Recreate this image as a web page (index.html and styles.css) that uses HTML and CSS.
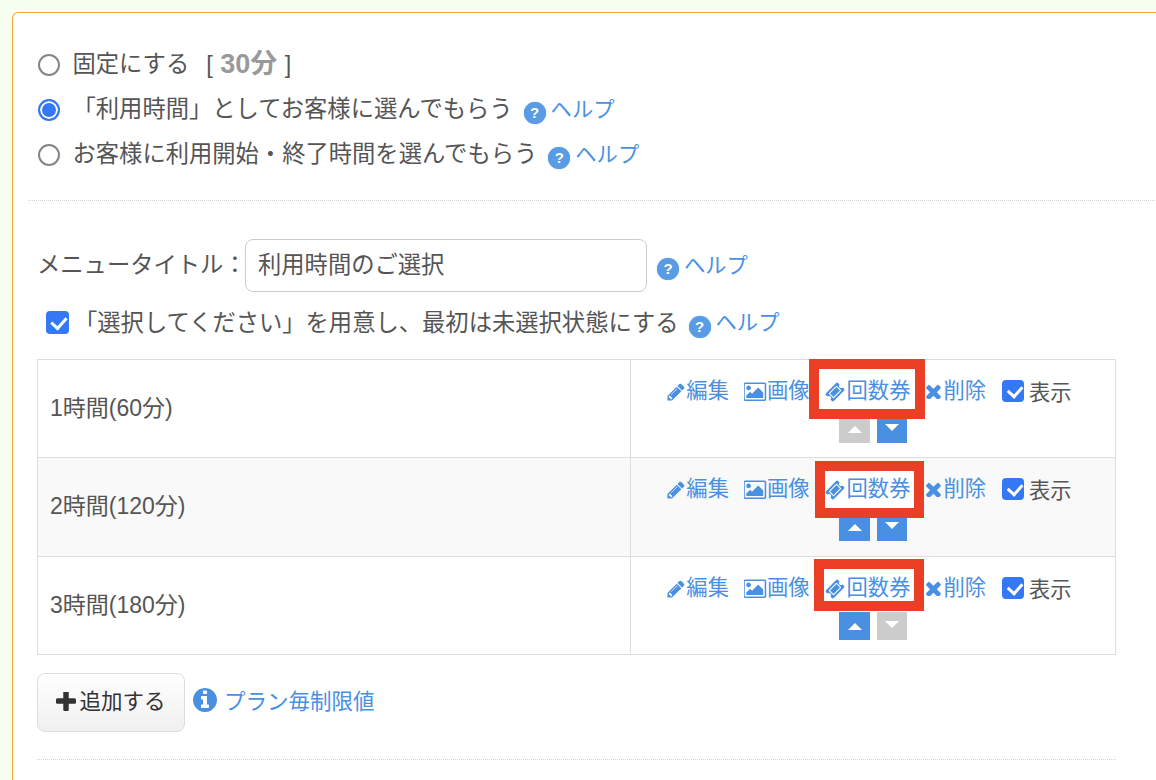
FILE: index.html
```html
<!DOCTYPE html>
<html lang="ja">
<head>
<meta charset="utf-8">
<title>メニュー設定</title>
<link rel="stylesheet" href="styles.css">
</head>
<body>
<main class="card">
  <label class="choice"><input class="radio" type="radio" name="mode"><span>固定にする</span><span class="fixed">[ <b>30分</b> ]</span></label>
  <label class="choice"><input class="radio" type="radio" name="mode" checked><span>「利用時間」としてお客様に選んでもらう</span><a class="help" href="#"><span class="q">?</span>ヘルプ</a></label>
  <label class="choice"><input class="radio" type="radio" name="mode"><span>お客様に利用開始・終了時間を選んでもらう</span><a class="help" href="#"><span class="q">?</span>ヘルプ</a></label>
  <hr class="rule rule-wide">
  <div class="title-row">
    <label class="title-label" for="menu-title">メニュータイトル：</label>
    <input class="title-input" id="menu-title" type="text" value="利用時間のご選択">
    <a class="help" href="#"><span class="q">?</span>ヘルプ</a>
  </div>
  <label class="unselected"><input class="check check-lg" type="checkbox" checked><span>「選択してください」を用意し、最初は未選択状態にする</span><a class="help" href="#"><span class="q">?</span>ヘルプ</a></label>
  <table class="plans">
    <tr>
      <td class="plan-name">1時間(60分)</td>
      <td class="plan-actions">
        <div class="actions">
          <a class="act" href="#"><svg class="ic" viewBox="0 0 1792 1792"><path d="M491 1536l91-91-235-235-91 91v107h128v128h107zm523-928q0-22-22-22-10 0-17 7l-542 542q-7 7-7 17 0 22 22 22 10 0 17-7l542-542q7-7 7-17zm-54-192l416 416-832 832h-416v-416zm683 96q0 53-37 90l-166 166-416-416 166-165q36-38 90-38 53 0 91 38l235 234q37 39 37 91z"/></svg>編集</a>
          <a class="act" href="#"><svg class="ic-pic" viewBox="0 0 1920 1792"><path d="M576 576q0 80-56 136t-136 56-136-56-56-136 56-136 136-56 136 56 56 136zm1024 384v448h-1408v-192l320-320 160 160 512-512zm96-704h-1600q-13 0-22.5 9.5t-9.5 22.5v1216q0 13 9.5 22.5t22.5 9.5h1600q13 0 22.5-9.5t9.5-22.5v-1216q0-13-9.5-22.5t-22.5-9.5zm160 32v1216q0 66-47 113t-113 47h-1600q-66 0-113-47t-47-113v-1216q0-66 47-113t113-47h1600q66 0 113 47t47 113z"/></svg>画像</a>
          <a class="act ticket ticket-1" href="#"><svg class="ic ic-ticket" viewBox="0 0 1792 1792"><path d="M1024 452l316 316-572 572-316-316zm-211 979l618-618q19-19 19-45t-19-45l-362-362q-18-18-45-18t-45 18l-618 618q-19 19-19 45t19 45l362 362q18 18 45 18t45-18zm889-637l-907 908q-37 37-90.5 37t-90.5-37l-126-126q56-56 56-136t-56-136-136-56-136 56l-125-126q-37-37-37-90.5t37-90.5l907-906q37-37 90.5-37t90.5 37l125 125q-56 56-56 136t56 136 136 56 136-56l126 125q37 37 37 90.5t-37 90.5z"/></svg>回数券</a>
          <a class="act" href="#"><svg class="ic-x" viewBox="300 300 1200 1200"><path d="M1490 1322q0 40-28 68l-136 136q-28 28-68 28t-68-28l-294-294-294 294q-28 28-68 28t-68-28l-136-136q-28-28-28-68t28-68l294-294-294-294q-28-28-28-68t28-68l136-136q28-28 68-28t68 28l294 294 294-294q28-28 68-28t68 28l136 136q28 28 28 68t-28 68l-294 294 294 294q28 28 28 68z"/></svg>削除</a>
          <label class="show"><input class="check check-sm" type="checkbox" checked>表示</label>
        </div>
        <div class="moves"><span class="move off"><i class="caret-up"></i></span><span class="move"><i class="caret-down"></i></span></div>
      </td>
    </tr>
    <tr class="even">
      <td class="plan-name">2時間(120分)</td>
      <td class="plan-actions">
        <div class="actions">
          <a class="act" href="#"><svg class="ic" viewBox="0 0 1792 1792"><path d="M491 1536l91-91-235-235-91 91v107h128v128h107zm523-928q0-22-22-22-10 0-17 7l-542 542q-7 7-7 17 0 22 22 22 10 0 17-7l542-542q7-7 7-17zm-54-192l416 416-832 832h-416v-416zm683 96q0 53-37 90l-166 166-416-416 166-165q36-38 90-38 53 0 91 38l235 234q37 39 37 91z"/></svg>編集</a>
          <a class="act" href="#"><svg class="ic-pic" viewBox="0 0 1920 1792"><path d="M576 576q0 80-56 136t-136 56-136-56-56-136 56-136 136-56 136 56 56 136zm1024 384v448h-1408v-192l320-320 160 160 512-512zm96-704h-1600q-13 0-22.5 9.5t-9.5 22.5v1216q0 13 9.5 22.5t22.5 9.5h1600q13 0 22.5-9.5t9.5-22.5v-1216q0-13-9.5-22.5t-22.5-9.5zm160 32v1216q0 66-47 113t-113 47h-1600q-66 0-113-47t-47-113v-1216q0-66 47-113t113-47h1600q66 0 113 47t47 113z"/></svg>画像</a>
          <a class="act ticket ticket-2" href="#"><svg class="ic ic-ticket" viewBox="0 0 1792 1792"><path d="M1024 452l316 316-572 572-316-316zm-211 979l618-618q19-19 19-45t-19-45l-362-362q-18-18-45-18t-45 18l-618 618q-19 19-19 45t19 45l362 362q18 18 45 18t45-18zm889-637l-907 908q-37 37-90.5 37t-90.5-37l-126-126q56-56 56-136t-56-136-136-56-136 56l-125-126q-37-37-37-90.5t37-90.5l907-906q37-37 90.5-37t90.5 37l125 125q-56 56-56 136t56 136 136 56 136-56l126 125q37 37 37 90.5t-37 90.5z"/></svg>回数券</a>
          <a class="act" href="#"><svg class="ic-x" viewBox="300 300 1200 1200"><path d="M1490 1322q0 40-28 68l-136 136q-28 28-68 28t-68-28l-294-294-294 294q-28 28-68 28t-68-28l-136-136q-28-28-28-68t28-68l294-294-294-294q-28-28-28-68t28-68l136-136q28-28 68-28t68 28l294 294 294-294q28-28 68-28t68 28l136 136q28 28 28 68t-28 68l-294 294 294 294q28 28 28 68z"/></svg>削除</a>
          <label class="show"><input class="check check-sm" type="checkbox" checked>表示</label>
        </div>
        <div class="moves"><span class="move"><i class="caret-up"></i></span><span class="move"><i class="caret-down"></i></span></div>
      </td>
    </tr>
    <tr class="odd">
      <td class="plan-name">3時間(180分)</td>
      <td class="plan-actions">
        <div class="actions">
          <a class="act" href="#"><svg class="ic" viewBox="0 0 1792 1792"><path d="M491 1536l91-91-235-235-91 91v107h128v128h107zm523-928q0-22-22-22-10 0-17 7l-542 542q-7 7-7 17 0 22 22 22 10 0 17-7l542-542q7-7 7-17zm-54-192l416 416-832 832h-416v-416zm683 96q0 53-37 90l-166 166-416-416 166-165q36-38 90-38 53 0 91 38l235 234q37 39 37 91z"/></svg>編集</a>
          <a class="act" href="#"><svg class="ic-pic" viewBox="0 0 1920 1792"><path d="M576 576q0 80-56 136t-136 56-136-56-56-136 56-136 136-56 136 56 56 136zm1024 384v448h-1408v-192l320-320 160 160 512-512zm96-704h-1600q-13 0-22.5 9.5t-9.5 22.5v1216q0 13 9.5 22.5t22.5 9.5h1600q13 0 22.5-9.5t9.5-22.5v-1216q0-13-9.5-22.5t-22.5-9.5zm160 32v1216q0 66-47 113t-113 47h-1600q-66 0-113-47t-47-113v-1216q0-66 47-113t113-47h1600q66 0 113 47t47 113z"/></svg>画像</a>
          <a class="act ticket ticket-3" href="#"><svg class="ic ic-ticket" viewBox="0 0 1792 1792"><path d="M1024 452l316 316-572 572-316-316zm-211 979l618-618q19-19 19-45t-19-45l-362-362q-18-18-45-18t-45 18l-618 618q-19 19-19 45t19 45l362 362q18 18 45 18t45-18zm889-637l-907 908q-37 37-90.5 37t-90.5-37l-126-126q56-56 56-136t-56-136-136-56-136 56l-125-126q-37-37-37-90.5t37-90.5l907-906q37-37 90.5-37t90.5 37l125 125q-56 56-56 136t56 136 136 56 136-56l126 125q37 37 37 90.5t-37 90.5z"/></svg>回数券</a>
          <a class="act" href="#"><svg class="ic-x" viewBox="300 300 1200 1200"><path d="M1490 1322q0 40-28 68l-136 136q-28 28-68 28t-68-28l-294-294-294 294q-28 28-68 28t-68-28l-136-136q-28-28-28-68t28-68l294-294-294-294q-28-28-28-68t28-68l136-136q28-28 68-28t68 28l294 294 294-294q28-28 68-28t68 28l136 136q28 28 28 68t-28 68l-294 294 294 294q28 28 28 68z"/></svg>削除</a>
          <label class="show"><input class="check check-sm" type="checkbox" checked>表示</label>
        </div>
        <div class="moves"><span class="move"><i class="caret-up"></i></span><span class="move off"><i class="caret-down"></i></span></div>
      </td>
    </tr>
  </table>
  <div class="add-row">
    <button class="add-btn" type="button"><svg class="ic-plus" viewBox="192 192 1408 1408"><path d="M1600 736v192q0 40-28 68t-68 28h-416v416q0 40-28 68t-68 28h-192q-40 0-68-28t-28-68v-416h-416q-40 0-68-28t-28-68v-192q0-40 28-68t68-28h416v-416q0-40 28-68t68-28h192q40 0 68 28t28 68v416h416q40 0 68 28t28 68z"/></svg><span class="add-text">追加する</span></button>
    <a class="limit" href="#"><svg class="ic-info" viewBox="128 128 1536 1536"><path d="M1152 1376v-160q0-14-9-23t-23-9h-96v-512q0-14-9-23t-23-9h-320q-14 0-23 9t-9 23v160q0 14 9 23t23 9h96v320h-96q-14 0-23 9t-9 23v160q0 14 9 23t23 9h448q14 0 23-9t9-23zm-128-896v-160q0-14-9-23t-23-9h-192q-14 0-23 9t-9 23v160q0 14 9 23t23 9h192q14 0 23-9t9-23zm640 416q0 209-103 385.5t-279.5 279.5-385.5 103-385.5-103-279.5-279.5-103-385.5 103-385.5 279.5-279.5 385.5-103 385.5 103 279.5 279.5 103 385.5z"/></svg><span class="limit-text">プラン毎制限値</span></a>
  </div>
  <hr class="rule rule-table">
</main>
</body>
</html>
```
FILE: styles.css
```css
html, body {
  margin: 0;
  height: 780px;
  overflow: hidden;
  background: #f6fff0;
}
body {
  padding: 12px 0 0 12px;
  box-sizing: border-box;
  color: #555;
  font-family: "Liberation Sans", "Noto Sans CJK JP", sans-serif;
  font-size: 23.3px;
}
a { color: #4a90e2; text-decoration: none; }
.card {
  width: 1200px;
  height: 768px;
  box-sizing: border-box;
  padding: 29px 0 0 24px;
  background: #fff;
  border: 1px solid #f2a530;
  border-bottom: 0;
  border-radius: 6px 6px 0 0;
}
.choice {
  display: flex;
  align-items: center;
  height: 45px;
  line-height: 43px;
}
.radio {
  appearance: none;
  box-sizing: border-box;
  width: 22px;
  height: 22px;
  margin: 0 12.5px 0 1px;
  flex: none;
  border: 2px solid #858585;
  border-radius: 50%;
  background: #fff;
}
.radio:checked {
  border-color: #3478f6;
  background: #3478f6;
  box-shadow: inset 0 0 0 2px #fff;
}
.fixed { margin-left: 17px; }
.fixed b { color: #999; margin: 0 1px; font-size: 27px; }
.help {
  display: inline-flex;
  align-items: center;
  height: 40px;
  line-height: 38px;
  margin-left: 11px;
  font-size: 21.3px;
}
.q {
  display: inline-block;
  width: 22px;
  height: 22px;
  margin: 7px 5px 0 0;
  border-radius: 50%;
  background: #5a9be6;
  box-shadow: 0 0 1px #5a9be6;
  color: #fff;
  font-size: 15px;
  font-weight: bold;
  line-height: 22px;
  text-align: center;
}
.rule {
  height: 0;
  margin: 0;
  border: 0;
  border-top: 1px dotted #d5d5d5;
}
.rule-wide { margin: 23px 0 38px -9px; }
.rule-table { width: 1079px; margin-top: 27px; }
.title-row {
  display: flex;
  align-items: center;
}
.title-label { flex: none; width: 208px; padding-bottom: 6px; white-space: nowrap; }
.title-input {
  width: 402px;
  height: 53px;
  box-sizing: border-box;
  padding: 0 12px 6px;
  border: 1px solid #ccc;
  border-radius: 8px;
  color: #555;
  font: inherit;
}
.title-row .help { margin-left: 10px; }
.unselected {
  display: flex;
  align-items: center;
  height: 32px;
  line-height: 28px;
  margin: 14px 0 21px 9px;
}
.unselected > span { padding-top: 2px; }
.check {
  appearance: none;
  position: relative;
  box-sizing: border-box;
  flex: none;
  border-radius: 4px;
  background: #3478f6;
}
.check::after {
  content: "";
  position: absolute;
  left: 35%;
  top: 14%;
  width: 30%;
  height: 52%;
  border: solid #fff;
  border-width: 0 3.5px 3.5px 0;
  transform: rotate(42deg);
}
.check-lg {
  width: 23px;
  height: 23px;
  margin: 0 5px 0 0;
}
.unselected .help { margin: 2px 0 0 10px; }
.plans {
  width: 1079px;
  border-collapse: collapse;
  table-layout: fixed;
  font-size: 21.3px;
}
.plans td {
  height: 98px;
  padding: 0;
  border: 1px solid #ddd;
  box-sizing: border-box;
}
.plans .even td { height: 99px; }
.plans .plan-name { width: 593px; padding: 0 0 6px 12px; font-size: 23px; }
.plans .plan-actions { vertical-align: top; }
.even { background: #f9f9f9; }
.actions {
  display: flex;
  justify-content: center;
  align-items: center;
  gap: 15px;
  height: 26px;
  margin-top: 17px;
  padding-right: 8px;
}
.act {
  display: inline-flex;
  align-items: center;
  box-sizing: border-box;
  height: 30px;
  padding-top: 3px;
  line-height: 27px;
  white-space: nowrap;
}
.act svg { fill: #4a90e2; flex: none; }
.ic { width: 20px; height: 20px; margin-top: 0; }
.ic-ticket { margin-right: 2px; }
.ic-pic { width: 23px; height: 21.5px; margin-top: 0; }
.ic-x { width: 15px; height: 15px; margin: 0 2px 0 1px; }
.ticket { position: relative; z-index: 1; }
.ticket::before {
  content: "";
  position: absolute;
  z-index: -1;
  box-sizing: border-box;
  background: #fff;
  border: 10px solid #ea3f25;
}
.ticket-1::before { left: -16px; right: -15px; top: -16px; bottom: -14px; }
.ticket-2::before { left: -10px; right: -14px; top: -12px; bottom: -15px; }
.ticket-3::before { left: -11px; right: -14px; top: -13px; bottom: -9px; }
.show {
  display: inline-flex;
  align-items: center;
  margin-left: 1px;
  color: #555;
}
.check-sm {
  width: 22px;
  height: 22px;
  margin: 2px 5px 0 0;
}
.moves {
  display: flex;
  justify-content: center;
  gap: 7px;
  margin-top: 12px;
}
.move {
  display: flex;
  justify-content: center;
  align-items: center;
  width: 30px;
  height: 28px;
  background: #4a90e2;
}
.move:first-child { width: 31px; }
.move.off { background: #ccc; }
.caret-up, .caret-down {
  width: 0;
  height: 0;
  border-left: 7px solid transparent;
  border-right: 7px solid transparent;
}
.caret-up { border-bottom: 7px solid #fff; }
.caret-down { border-top: 7px solid #fff; margin-bottom: 4px; }
.add-row {
  display: flex;
  align-items: center;
  margin-top: 18px;
}
.add-btn {
  display: inline-flex;
  align-items: center;
  justify-content: center;
  width: 148px;
  height: 59px;
  padding: 0;
  border: 1px solid #ddd;
  border-radius: 8px;
  background: linear-gradient(#fff, #f0f0f0);
  color: #333;
  font: inherit;
  font-size: 21.5px;
}
.add-text { padding-bottom: 6px; }
.ic-plus { width: 20px; height: 20px; margin-right: 3px; margin-bottom: 2px; fill: #333; }
.limit {
  display: inline-flex;
  align-items: center;
  margin-left: 8px;
  font-size: 21.5px;
}
.limit-text { padding-bottom: 6px; }
.ic-info { width: 24px; height: 24px; margin: 0 7px 6px 0; fill: #4a90e2; }
```
